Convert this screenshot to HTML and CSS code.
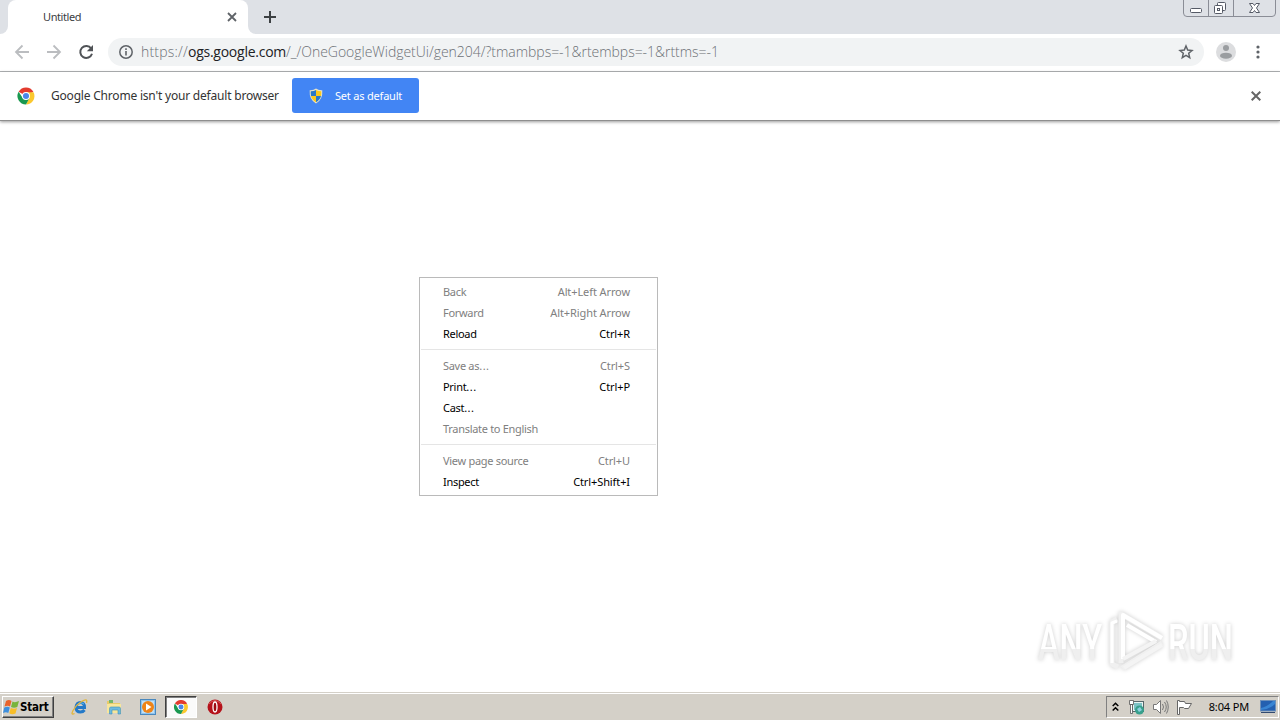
FILE: index.html
```html
<!DOCTYPE html>
<html lang="en">
<head>
    <meta charset="UTF-8">
    <title>Untitled</title>
    <link rel="stylesheet" href="styles.css">
</head>
<body>
    <div class="tab-strip">
        <div class="prev-tab"></div>
        <div class="tab">
            <span class="tab-title">Untitled</span>
            <svg class="tab-close" width="10" height="10" viewBox="0 0 10 10"><path d="M1 1L9 9M9 1L1 9" stroke="#5f6368" stroke-width="1.8"/></svg>
        </div>
        <div class="tab-rest">
            <svg class="new-tab" width="12" height="12" viewBox="0 0 12 12"><path d="M6 0V12M0 6H12" stroke="#3c4043" stroke-width="2"/></svg>
            <div class="window-buttons">
                <svg width="93" height="17" viewBox="0 0 93 17" fill="none">
                    <path d="M.5 0V13Q.5 16.5 4 16.5H89Q92.500 16.500 92.500 13V0M25.500 0V16M50.500 0V16" stroke="#8a8d96"/>
                    <rect x="7.500" y="8.500" width="11" height="4" rx="1" fill="#fff" stroke="#555a66"/>
                    <rect x="34.500" y="2.500" width="8" height="8" rx="1" fill="#fff" stroke="#555a66"/>
                    <rect x="31.500" y="5.500" width="8" height="8" rx="1" fill="#fff" stroke="#555a66"/>
                    <rect x="34.500" y="8.500" width="2" height="2" stroke="#555a66"/>
                    <path d="M66.500 3.500H70L71.500 5.500L73 3.500H76.500L73.500 8L76.500 12.500H73L71.500 10.500L70 12.500H66.500L69.500 8Z" fill="#fff" stroke="#555a66"/>
                </svg>
            </div>
        </div>
    </div>

    <div class="toolbar">
        <svg class="nav-icon" width="16" height="16" viewBox="0 0 16 16" fill="none" stroke="#bbbdc0" stroke-width="1.8"><path d="M15 8H2M8.500 1.500L2 8L8.500 14.500"/></svg>
        <svg class="nav-icon" width="16" height="16" viewBox="0 0 16 16" fill="none" stroke="#bbbdc0" stroke-width="1.800"><path d="M1 8H14M7.500 1.500L14 8L7.500 14.500"/></svg>
        <svg class="nav-icon" width="16" height="16" viewBox="0 0 16 16"><path d="M13.200 4.500A6 6 0 1 0 14 9.800" fill="none" stroke="#505357" stroke-width="2"/><path d="M15 1V7.200H8.800Z" fill="#505357"/></svg>
        <div class="omnibox">
            <svg class="info-icon" width="14" height="14" viewBox="0 0 14 14"><circle cx="7" cy="7" r="6.200" fill="none" stroke="#5f6368" stroke-width="1.500"/><path d="M7 6V10.500M7 3.300V4.900" stroke="#5f6368" stroke-width="1.600"/></svg>
            <span class="url"><i>https://</i><b>ogs.google.com</b>/_/OneGoogleWidgetUi/gen204/?tmambps=-1&amp;rtembps=-1&amp;rttms=-1</span>
            <svg class="star" width="16" height="16" viewBox="0 0 16 16"><path d="M8 2L9.700 6.100L14 6.500L10.700 9.300L11.700 13.600L8 11.300L4.300 13.600L5.300 9.300L2 6.500L6.300 6.100Z" fill="none" stroke="#5f6368" stroke-width="1.500"/></svg>
        </div>
        <svg class="avatar" width="20" height="20" viewBox="0 0 20 20"><circle cx="10" cy="10" r="10" fill="#dcdddf"/><circle cx="10" cy="6" r="3" fill="#9a9da0"/><ellipse cx="10" cy="13.700" rx="6" ry="3" fill="#9a9da0"/></svg>
        <svg class="kebab" width="4" height="14" viewBox="0 0 4 14" fill="#5f6368"><circle cx="2" cy="2" r="1.600"/><circle cx="2" cy="7" r="1.600"/><circle cx="2" cy="12" r="1.600"/></svg>
    </div>

    <div class="infobar">
        <svg class="chrome-logo" width="18" height="18" viewBox="-.5 -.5 19 19">
            <path d="M9 9L1.200 4.500A9 9 0 0 1 16.800 4.500Z" fill="#e33b2e"/>
            <path d="M9 5H17A9 9 0 0 1 9 18L12.500 11Z" fill="#fbc82e"/>
            <path d="M1.200 4.500A9 9 0 0 0 9 18L12.700 11L9 9L5.500 11Z" fill="#1a9850"/>
            <circle cx="9" cy="9" r="4.200" fill="#fff"/><circle cx="9" cy="9" r="3.200" fill="#4a86e8"/>
        </svg>
        <span class="infobar-text">Google Chrome isn't your default browser</span>
        <div class="default-button">
            <svg width="14" height="16" viewBox="0 0 14 16">
                <path d="M7 .5Q9.500 2.500 13.300 2.200Q14 11.500 7 15.500Q0 11.500 .7 2.200Q4.500 2.500 7 .5Z" fill="#e8e4c8"/>
                <path d="M7 2V8H2Q1.500 5 1.800 3.300Q5 3.300 7 2ZM7 8H12Q11 12 7 14.200Z" fill="#2a78c8"/>
                <path d="M7 2Q9 3.300 12.200 3.300Q12.500 5 12 8H7ZM7 8V14.200Q3 12 2 8Z" fill="#fbc81c"/>
            </svg>
            <span>Set as default</span>
        </div>
        <svg class="infobar-close" width="10" height="10" viewBox="0 0 10 10"><path d="M.7 .7L9.300 9.300M9.300 .7L.7 9.300" stroke="#666" stroke-width="2"/></svg>
    </div>

    <div class="page">
        <div class="context-menu">
            <div class="item disabled"><span>Back</span><span class="key">Alt+Left Arrow</span></div>
            <div class="item disabled"><span>Forward</span><span class="key">Alt+Right Arrow</span></div>
            <div class="item"><span>Reload</span><span class="key">Ctrl+R</span></div>
            <div class="separator"></div>
            <div class="item disabled"><span>Save as<i>...</i></span><span class="key">Ctrl+S</span></div>
            <div class="item"><span>Print<i>...</i></span><span class="key">Ctrl+P</span></div>
            <div class="item"><span>Cast<i>...</i></span></div>
            <div class="item disabled"><span>Translate to English</span></div>
            <div class="separator"></div>
            <div class="item disabled"><span>View page source</span><span class="key">Ctrl+U</span></div>
            <div class="item"><span>Inspect</span><span class="key">Ctrl+Shift+I</span></div>
        </div>

        <svg class="watermark" width="230" height="76" viewBox="0 0 230 76">
            <defs>
                <linearGradient id="fade" x1="0" y1="0" x2="0" y2="1"><stop offset=".6" stop-color="#fff"/><stop offset=".6" stop-color="#efefef"/></linearGradient>
            </defs>
            <g fill="url(#fade)">
                <text x="8" y="55" textLength="64" lengthAdjust="spacingAndGlyphs">ANY</text>
                <text x="138" y="55" textLength="65" lengthAdjust="spacingAndGlyphs">RUN</text>
            </g>
            <g fill="none" stroke-linejoin="round">
                <path d="M87 14L82 17V59L88 62M91 58V9L132 33M132 38L92 63" stroke="#f0f0f0" stroke-width="5"/>
                <path d="M87 16L82 18V58" stroke="#fff" stroke-width="3"/>
                <path d="M93 54V10L132 33M97 20L126 37" stroke="#fff" stroke-width="4"/>
                <path d="M93 54L126 36M94 63L132 40" stroke="#f4f4f4" stroke-width="4"/>
            </g>
        </svg>
    </div>

    <div class="taskbar">
        <div class="start">
            <svg width="17" height="16" viewBox="0 0 17 16">
                <path d="M3 2Q6 0 8.500 2L7 7.500Q5 6 1.500 7.500Z" fill="#e9632b"/>
                <path d="M9.500 2.500Q12 4 16 2L14.300 8Q11 9.500 8 8Z" fill="#78b43c"/>
                <path d="M1.300 8.500Q4.500 7 6.800 8.500L5.300 14Q3 12.500 0 14Z" fill="#3e8fdd"/>
                <path d="M7.800 9Q11 10.500 14 9L12.500 14.500Q9 16 6.300 14.300Z" fill="#f8be28"/>
            </svg>
            <span>Start</span>
        </div>
        <div class="quick-launch">
            <div class="launcher">
                <svg width="18" height="18" viewBox="0 0 18 18" fill="none">
                    <path d="M5.500 9.500H13.500Q13.500 4.500 9.500 4.500T5 9.500Q5 14 9.500 14Q12 14 13.500 12" stroke="#2479c8" stroke-width="3"/>
                    <path d="M5 8Q9 3 13 6" stroke="#59baf0"/>
                    <path d="M3.500 15.500Q-.5 17.500 2 12.500Q5 7 10.500 3.500Q17 -.5 15.500 5" stroke="#e3b63b" stroke-width="1.300"/>
                </svg>
            </div>
            <div class="launcher">
                <svg width="16" height="16" viewBox="0 0 16 16">
                    <path d="M1 2H6L7 4H14V14H1Z" fill="#e8ca69"/><path d="M3 1H7V4H3Z" fill="#74b76a"/><path d="M1 5H15V14H1Z" fill="#f8e69b"/>
                    <path d="M3.500 15V9.500Q3.500 8 5 8H13Q14.500 8 14.500 9.500V15H12V11H6V15Z" fill="#6cb9df" stroke="#3e91bb" stroke-width=".6"/>
                </svg>
            </div>
            <div class="launcher">
                <svg width="16" height="16" viewBox="0 0 16 16"><rect x=".5" y=".5" width="15" height="15" fill="#8fc4ee" stroke="#4a88bd"/><rect x="2" y="2" width="12" height="12" fill="#bfe0f7"/><circle cx="8" cy="8" r="6" fill="#ee8419"/><path d="M6 4.500L11.500 8L6 11.500Z" fill="#fff"/></svg>
            </div>
            <div class="launcher active">
                <svg width="14" height="14" viewBox="0 0 18 18">
                    <path d="M9 9L1.200 4.500A9 9 0 0 1 16.800 4.500Z" fill="#e33b2e"/>
                    <path d="M9 5H17A9 9 0 0 1 9 18L12.500 11Z" fill="#fbc82e"/>
                    <path d="M1.200 4.500A9 9 0 0 0 9 18L12.700 11L9 9L5.500 11Z" fill="#1a9850"/>
                    <circle cx="9" cy="9" r="4.200" fill="#fff"/><circle cx="9" cy="9" r="3.200" fill="#4a86e8"/>
                </svg>
            </div>
            <div class="launcher">
                <svg width="16" height="16" viewBox="0 0 16 16"><circle cx="8" cy="8" r="7.500" fill="#b5121b"/><path d="M2 5Q8 -2 14 5" fill="none" stroke="#d95555"/><ellipse cx="8" cy="8" rx="2" ry="5" fill="#9e0a10" stroke="#fff" stroke-width="1.300"/></svg>
            </div>
        </div>
        <div class="tray">
            <svg width="7" height="10" viewBox="0 0 7 10"><path d="M.7 4L3.500 1.200L6.300 4M.7 8.500L3.500 5.700L6.300 8.500" fill="none" stroke="#000" stroke-width="1.500"/></svg>
            <svg class="network" width="17" height="16" viewBox="0 0 17 16"><rect x="4.500" y="2.500" width="11" height="10" fill="#e7f4f2" stroke="#56666a"/><rect x="6" y="4" width="8" height="7" fill="#7cc2c5"/><circle cx="11.500" cy="11" r="4.500" fill="#38a08c"/><path d="M9 10L12 8L14 11L11 13Z" fill="#8ccfe0"/><path d="M1.500 1.500H5.500V5.500H1.500ZM2.500 5.500H4.500V14.500H2.500Z" fill="#fff" stroke="#555" stroke-width=".8"/></svg>
            <svg class="speaker" width="17" height="16" viewBox="0 0 17 16" fill="none" stroke="#777"><path d="M1.500 5.500H4.500L8.500 1.500V14.500L4.500 10.500H1.500Z" fill="#fff"/><path d="M10.500 5Q12.500 8 10.500 11M12.500 3Q16 8 12.500 13M14.500 1.500Q18 8 14.500 14.500"/></svg>
            <svg class="flag" width="17" height="16" viewBox="0 0 17 16"><path d="M1.500 15.500V1.500H3.500V2.500H8.500L9.500 4.500H15.500L12.500 9.500H8.500L7.500 8.500H3.500V15.500Z" fill="#fff" stroke="#666"/></svg>
            <span class="clock">8:04 PM</span>
            <svg class="desktop" width="16" height="14" viewBox="0 0 16 14"><rect x=".5" y=".5" width="15" height="10.500" fill="#2460b0" stroke="#6f91ba"/><path d="M1 8Q7 7 13 1H15V4Q10 9 1 10Z" fill="#3985d3"/><path d="M1 12.500H15" stroke="#324a70"/></svg>
        </div>
    </div>
</body>
</html>
```
FILE: styles.css
```css
* {
    box-sizing: border-box;
}
body {
    margin: 0;
    height: 720px;
    overflow: hidden;
    display: flex;
    flex-direction: column;
    background-color: #fff;
    color: #000;
    font-family: "Noto Sans", "Open Sans", sans-serif;
    font-size: 11px;
}
svg {
    display: block;
    flex: none;
}
span {
    white-space: nowrap;
}
i {
    font-style: normal;
}
.tab-strip {
    display: flex;
    height: 34px;
    background: linear-gradient(#dee1e6 20px, #fff 20px);
}
.prev-tab {
    width: 8px;
    background-color: #dee1e6;
    border-bottom-right-radius: 8px;
}
.tab {
    display: flex;
    align-items: center;
    justify-content: space-between;
    width: 240px;
    padding: 0 11px 0 35px;
    border-radius: 8px 8px 0 0;
    background-color: #fff;
    color: #3c4043;
}
.tab-title {
    padding-bottom: 2px;
    letter-spacing: -0.4px;
}
.tab-rest {
    display: flex;
    flex: 1;
    justify-content: space-between;
    align-items: flex-start;
    padding: 0 4px 0 16px;
    background-color: #dee1e6;
    border-bottom-left-radius: 8px;
}
.new-tab {
    margin-top: 11px;
}
.toolbar {
    display: flex;
    align-items: center;
    height: 38px;
    padding: 0 20px 1px 14px;
    border-bottom: 1px solid #b2b4b7;
}
.nav-icon {
    margin-right: 16px;
}
.nav-icon:nth-child(3) {
    margin-right: 14px;
}
.omnibox {
    display: flex;
    flex: 1;
    align-items: center;
    height: 28px;
    padding: 0 10px 0 11px;
    border-radius: 14px;
    background-color: #f1f3f4;
}
.url {
    margin-left: 8px;
    padding-bottom: 1px;
    color: #6c7074;
    font-size: 14px;
    font-family: "Open Sans", sans-serif;
    font-weight: 300;
    letter-spacing: -0.03px;
}
.url i {
    letter-spacing: 0.2px;
}
.url b {
    color: #202124;
    font-weight: 400;
    letter-spacing: -0.25px;
}
.star {
    margin-left: auto;
}
.avatar {
    margin: 0 20px 0 12px;
}
.infobar {
    display: flex;
    align-items: center;
    height: 49px;
    padding: 0 19px 1px 17px;
    border-bottom: 1px solid #8e8e8e;
    box-shadow: 0 1px 3px rgba(0, 0, 0, 0.4);
    z-index: 1;
}
.infobar-text {
    width: 241px;
    margin-left: 16px;
    color: #333;
    font-size: 12px;
    letter-spacing: -0.2px;
}
.default-button {
    display: flex;
    align-items: center;
    gap: 12px;
    width: 127px;
    height: 35px;
    padding-left: 17px;
    border-radius: 3px;
    background-color: #4285f4;
    color: #fff;
    letter-spacing: -0.2px;
}
.default-button span {
    padding-bottom: 1px;
}
.infobar-close {
    margin-left: auto;
}
.page {
    flex: 1;
    position: relative;
}
.context-menu {
    position: absolute;
    left: 419px;
    top: 156px;
    width: 239px;
    height: 219px;
    padding: 3px 1px;
    border: 1px solid #bababa;
    background-color: #fff;
}
.item {
    display: flex;
    justify-content: space-between;
    height: 21px;
    padding: 0 26px 0 22px;
    line-height: 21px;
    letter-spacing: -0.3px;
}
.item i {
    letter-spacing: 0.5px;
}
.key {
    letter-spacing: -0.1px;
}
.disabled {
    color: #808080;
}
.separator {
    height: 1px;
    margin: 5px 0;
    background-color: #e5e5e5;
}
.watermark {
    position: absolute;
    left: 1030px;
    top: 484px;
    font-family: Roboto, sans-serif;
    font-size: 50px;
    font-weight: 500;
    filter: drop-shadow(0 0 2px rgba(0, 0, 0, 0.2));
}
.taskbar {
    display: flex;
    align-items: center;
    height: 28px;
    padding: 1px 1px 0 2px;
    border-top: 1px solid #d4d0c8;
    background-color: #d4d0c8;
    box-shadow: inset 0 1px 0 #fff;
}
.start {
    display: flex;
    align-items: center;
    width: 52px;
    height: 22px;
    border: 1px solid;
    border-color: #fff #404040 #404040 #fff;
    box-shadow: inset -1px -1px 0 #808080;
    font-family: "DejaVu Sans Condensed", "DejaVu Sans", sans-serif;
    font-size: 11.5px;
    font-weight: bold;
    letter-spacing: -0.2px;
}
.quick-launch {
    display: flex;
    margin-left: 9px;
}
.launcher {
    display: flex;
    align-items: center;
    justify-content: center;
    width: 34px;
    height: 22px;
}
.launcher.active {
    width: 32px;
    margin: 0 1px 0 0;
    border: 1px solid;
    border-color: #404040 #fff #fff #404040;
    box-shadow: inset 1px 1px 0 #808080;
    background-color: #fafafa;
}
.tray {
    display: flex;
    align-items: center;
    width: 173px;
    height: 22px;
    margin-left: auto;
    padding: 0 2px 0 5px;
    border: 1px solid;
    border-color: #808080 #fff #fff #808080;
}
.network {
    margin-left: 9px;
}
.speaker, .flag {
    margin-left: 7px;
}
.clock {
    margin-left: auto;
    margin-right: 11px;
    padding-bottom: 1px;
    letter-spacing: -0.15px;
}
```
